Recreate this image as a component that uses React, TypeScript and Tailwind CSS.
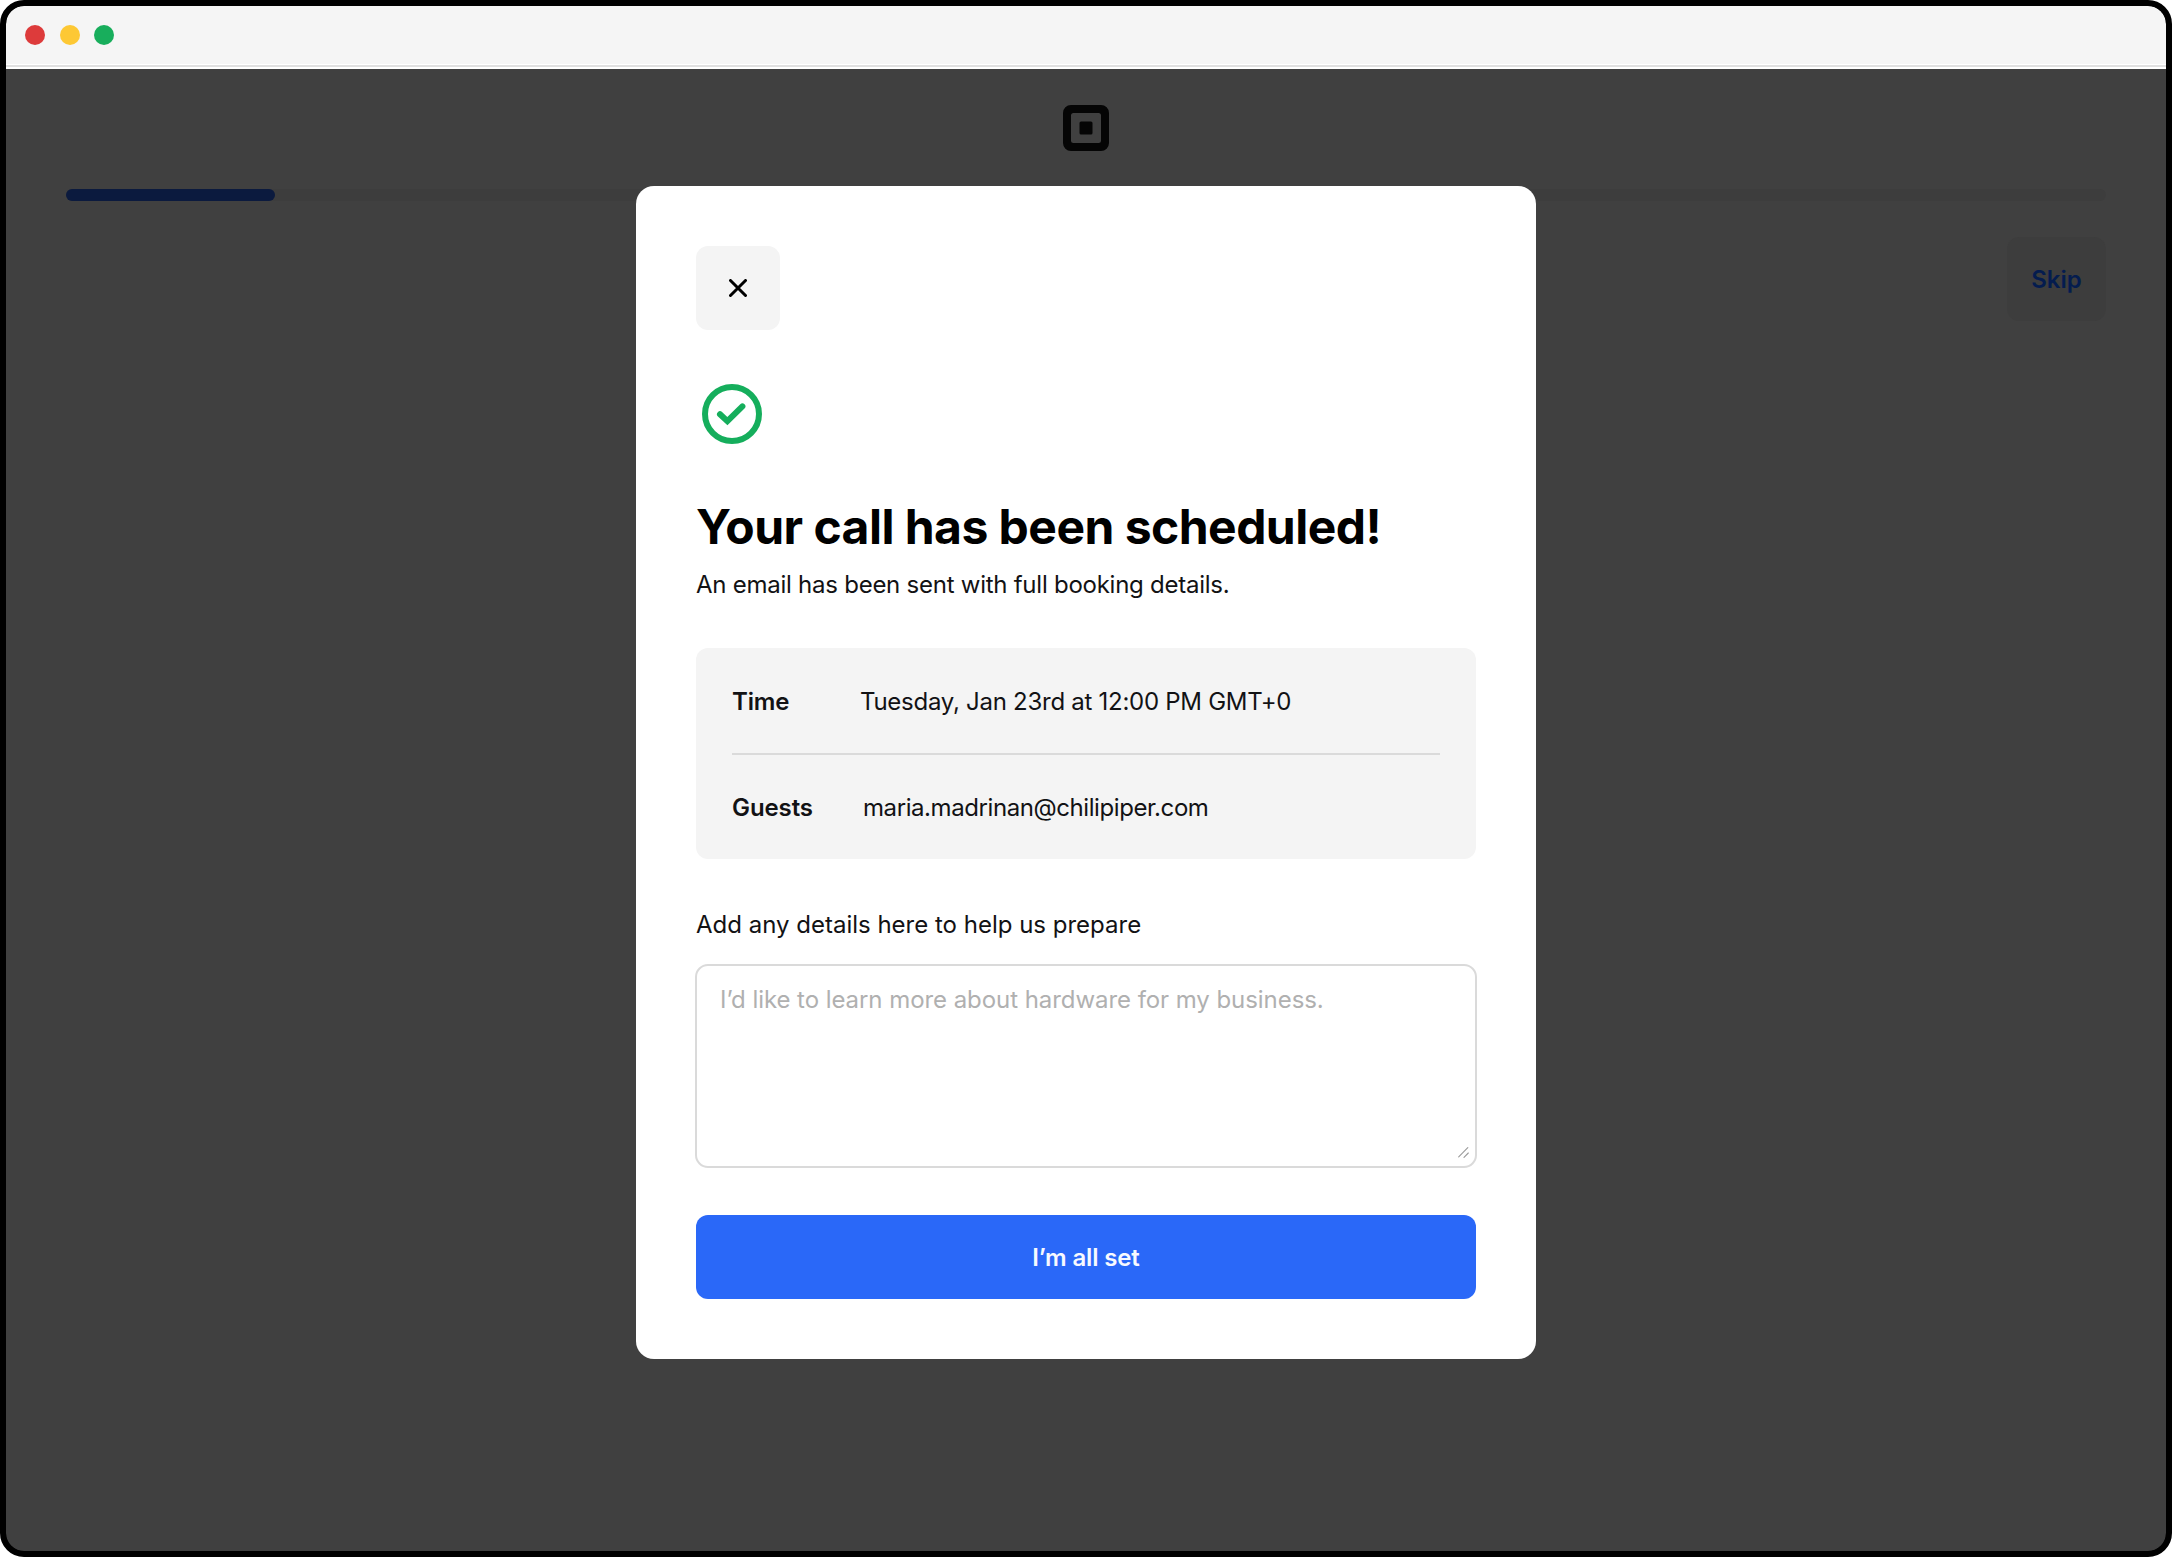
const LogoMark = () => (
  <svg width="46" height="46" viewBox="0 0 46 46" className="block">
    <path
      fillRule="evenodd"
      fill="#050505"
      d="M8 0H38A8 8 0 0 1 46 8V38A8 8 0 0 1 38 46H8A8 8 0 0 1 0 38V8A8 8 0 0 1 8 0ZM10.5 8A2.5 2.5 0 0 0 8 10.5V35.5A2.5 2.5 0 0 0 10.5 38H35.5A2.5 2.5 0 0 0 38 35.5V10.5A2.5 2.5 0 0 0 35.5 8Z"
    />
    <rect x="16.5" y="16.5" width="13" height="13" rx="1.5" fill="#050505" />
  </svg>
);

const CloseIcon = () => (
  <svg width="18" height="18" viewBox="0 0 18 18" fill="none" stroke="#000" strokeWidth="3" strokeLinecap="round">
    <path d="M1.5 1.5L16.5 16.5M16.5 1.5L1.5 16.5" />
  </svg>
);

const SuccessIcon = () => (
  <svg width="60" height="60" viewBox="0 0 60 60" fill="none" stroke="#15ae5c" strokeWidth="6" className="block">
    <circle cx="30" cy="30" r="27" />
    <path d="M18 30.2L25.4 37.2L40.4 22.4" strokeLinecap="round" />
  </svg>
);

const ResizeGrip = () => (
  <svg width="11" height="11" viewBox="0 0 11 11" fill="none" stroke="#9a9a9a" strokeWidth="1.1" strokeLinecap="round" className="block">
    <path d="M0.7 9.8L9.8 0.7M6 10.3L10.3 6" />
  </svg>
);

const Modal = () => (
  <div className="flex h-[1173px] w-[900px] flex-col rounded-[18px] bg-white px-[60px] pt-[60px]">
    <button className="flex size-[84px] shrink-0 items-center justify-center rounded-xl bg-[#f4f4f4]">
      <CloseIcon />
    </button>
    <div className="mt-[54px] ml-1.5">
      <SuccessIcon />
    </div>
    <h1 className="mt-[53px] h-[60px] text-[48px] leading-[60px] font-bold tracking-[-0.53px] whitespace-nowrap text-black">
      Your call has been scheduled!
    </h1>
    <p className="mt-[10px] h-9 text-[24px] leading-9 tracking-[-0.25px] whitespace-nowrap">
      An email has been sent with full booking details.
    </p>

    <div className="mt-[45px] flex h-[211px] shrink-0 flex-col rounded-xl bg-[#f4f4f4] px-9">
      <div className="flex h-[105px] items-center pt-[2px] text-[24px]">
        <span className="w-[128px] font-semibold tracking-[-0.2px]">Time</span>
        <span className="tracking-[-0.27px] whitespace-nowrap">Tuesday, Jan 23rd at 12:00 PM GMT+0</span>
      </div>
      <div className="h-[2px] bg-[#dadada]" />
      <div className="flex h-[104px] items-center pt-[2px] text-[24px]">
        <span className="w-[131px] font-semibold tracking-[-0.1px]">Guests</span>
        <span className="tracking-[-0.42px] whitespace-nowrap">maria.madrinan@chilipiper.com</span>
      </div>
    </div>

    <p className="mt-[48px] h-9 text-[24px] leading-9 whitespace-nowrap">Add any details here to help us prepare</p>
    <div className="-mx-px mt-[21px] flex h-[204px] shrink-0 flex-col justify-between rounded-[13px] border-2 border-[#dadada] pt-[16px] pr-[6px] pb-[8px] pl-[23px]">
      <p className="text-[24px] leading-9 tracking-[-0.06px] whitespace-nowrap text-[#b0b0b0]">
        I’d like to learn more about hardware for my business.
      </p>
      <div className="self-end">
        <ResizeGrip />
      </div>
    </div>
    <button className="mt-[47px] h-[84px] shrink-0 rounded-xl bg-[#2a68f8] pt-[2px] text-[24px] font-semibold tracking-[-0.15px] text-[#f7f9ff]">
      I’m all set
    </button>
  </div>
);

export default function App() {
  return (
    <div className="h-[1557px] w-[2172px] bg-white font-['Inter',sans-serif] text-[#121214]">
      <div className="flex h-full w-full flex-col overflow-hidden rounded-[24px] border-6 border-black bg-black">
        <div className="flex h-[58px] shrink-0 items-center gap-[14.5px] rounded-t-[18px] bg-[#f5f5f5] pl-[19px]">
          <span className="size-5 rounded-full bg-[#dd3b3b]" />
          <span className="size-5 rounded-full bg-[#fdc834]" />
          <span className="size-5 rounded-full bg-[#18ae5c]" />
        </div>
        <div className="h-[5px] shrink-0 border-t border-b-2 border-white bg-[#e0e0e0]" />

        <div className="relative flex-1 rounded-b-[18px] bg-[#404040] px-[60px] pt-[36px]">
          <div className="flex justify-center pr-px">
            <LogoMark />
          </div>
          <div className="mt-[38px] h-3 rounded-full bg-[#3d3d3d]">
            <div className="h-full w-[209px] rounded-full bg-[#0b1a3e]" />
          </div>
          <div className="mt-9 flex justify-end">
            <button className="flex h-[84px] w-[99px] items-center justify-center rounded-xl bg-[#3d3d3d] pt-[2px] text-[24px] font-semibold text-[#041c4f]">
              Skip
            </button>
          </div>
          <div className="absolute inset-x-0 top-[117px] flex justify-center">
            <Modal />
          </div>
        </div>
      </div>
    </div>
  );
}
